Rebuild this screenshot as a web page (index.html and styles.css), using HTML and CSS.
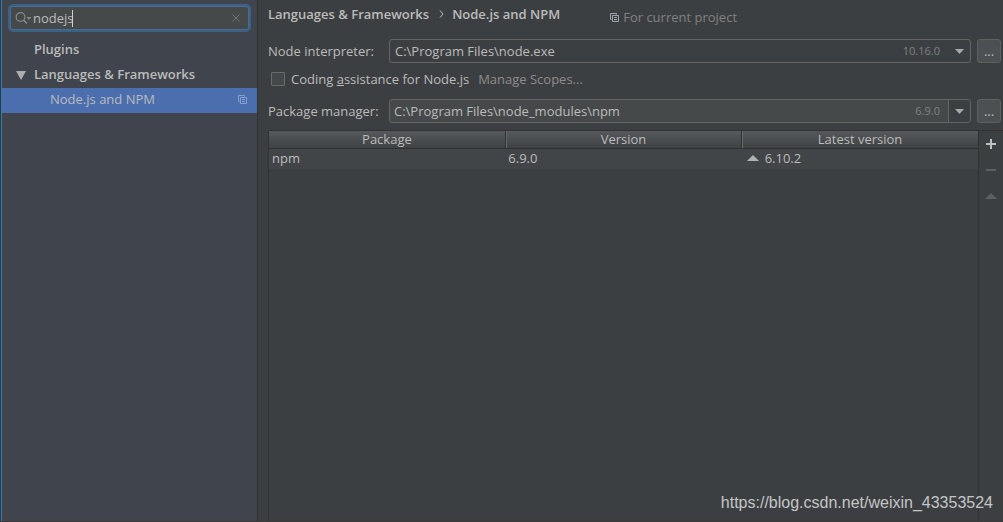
FILE: index.html
```html
<!DOCTYPE html>
<html lang="en">
<head>
<meta charset="utf-8">
<title>Settings</title>
<link rel="stylesheet" href="styles.css">
</head>
<body>
<div class="window">
  <aside class="sidebar">
    <label class="search">
      <svg class="search-icon" width="17" height="14" viewBox="0 0 17 14" aria-hidden="true"><circle cx="5.5" cy="6" r="4.4" fill="none" stroke="#84898c" stroke-width="1.2"/><path d="M8.7 9.2 12 12.5" stroke="#84898c" stroke-width="1.6"/><path d="M11.5 6h5L14 9z" fill="#84898c"/></svg>
      <input class="search-input" type="text" value="nodejs" aria-label="Search settings">
      <span class="caret"></span>
      <button class="clear" type="button" aria-label="Clear"><svg width="8" height="8" viewBox="0 0 8 8"><path d="M.5.5l7 7M7.5.5l-7 7" stroke="#6f7577" fill="none"/></svg></button>
    </label>
    <nav class="tree">
      <a class="node group" href="#">Plugins</a>
      <a class="node group" href="#"><svg class="twisty" width="10" height="9" viewBox="0 0 10 9" aria-hidden="true"><path d="M0 0h10L5 9z" fill="#adadad"/></svg>Languages &amp; Frameworks</a>
      <a class="node leaf selected" href="#">Node.js and NPM<svg class="scope" width="9" height="9" viewBox="0 0 9 9" fill="none" stroke="#8aa0cc" aria-hidden="true"><path d="M1.5 6.5h-1v-6h6v1M2.5 2.5h6v6h-6zM4 4.5h3M4 6.5h3"/></svg></a>
    </nav>
  </aside>
  <main class="main">
    <header class="crumbs">
      <h1 class="title">Languages &amp; Frameworks<svg class="chevron" width="5" height="8" viewBox="0 0 5 8" aria-hidden="true"><path d="M1 .5 4 4 1 7.5" fill="none" stroke="#bbb"/></svg>Node.js and NPM</h1>
      <span class="project"><svg width="9" height="9" viewBox="0 0 9 9" fill="none" stroke="#9aa7b0" aria-hidden="true"><path d="M1.5 6.5h-1v-6h6v1M2.5 2.5h6v6h-6zM4 4.5h3M4 6.5h3"/></svg>For current project</span>
    </header>
    <div class="field">
      <label class="field-label" for="interpreter">Node interpreter:</label>
      <div class="combo">
        <select class="combo-value" id="interpreter"><option>C:\Program Files\node.exe</option></select>
        <span class="version">10.16.0</span>
        <span class="arrow"><svg width="9" height="5" viewBox="0 0 9 5"><path d="M0 0h9L4.5 5z" fill="#a5a9ab"/></svg></span>
      </div>
      <button class="browse" type="button" aria-label="Browse interpreters">...</button>
    </div>
    <div class="assist">
      <input class="check" type="checkbox" id="assist">
      <label for="assist">Coding <u>a</u>ssistance for Node.js</label>
      <a class="scopes" href="#">Manage Scopes...</a>
    </div>
    <div class="field">
      <label class="field-label" for="manager">Package manager:</label>
      <div class="combo editable">
        <input class="combo-value" id="manager" type="text" value="C:\Program Files\node_modules\npm">
        <span class="version">6.9.0</span>
        <button class="arrow" type="button" aria-label="Show package managers"><svg width="9" height="5" viewBox="0 0 9 5"><path d="M0 0h9L4.5 5z" fill="#a5a9ab"/></svg></button>
      </div>
      <button class="browse" type="button" aria-label="Browse package managers">...</button>
    </div>
    <section class="packages">
      <div class="table-wrap">
        <table class="table">
          <thead><tr><th>Package</th><th>Version</th><th>Latest version</th></tr></thead>
          <tbody><tr><td>npm</td><td>6.9.0</td><td><svg class="upgrade" width="12" height="6" viewBox="0 0 12 6" aria-hidden="true"><path d="M0 6 6 0l6 6z" fill="#afb1b3"/></svg>6.10.2</td></tr></tbody>
        </table>
      </div>
      <div class="tools">
        <button class="tool" type="button" aria-label="Install"><svg width="10" height="10" viewBox="0 0 10 10"><path d="M5 0v10M0 5h10" stroke="#bfc1c2" stroke-width="2"/></svg></button>
        <button class="tool" type="button" aria-label="Uninstall" disabled><svg width="10" height="10" viewBox="0 0 10 10"><path d="M0 5h10" stroke="#5e6060" stroke-width="2"/></svg></button>
        <button class="tool" type="button" aria-label="Upgrade" disabled><svg width="12" height="6" viewBox="0 0 12 6"><path d="M0 6 6 0l6 6z" fill="#5e6060"/></svg></button>
      </div>
    </section>
  </main>
  <span class="watermark">https://blog.csdn.net/weixin_43353524</span>
</div>
</body>
</html>
```
FILE: styles.css
```css
* { box-sizing: border-box; }
body {
  margin: 0;
  background: #3c3f41;
  color: #bbbbbb;
  font: 13px/20px "Open Sans", "Noto Sans", sans-serif;
}
button, input, select { font: inherit; color: inherit; margin: 0; padding: 0; border: 0; background: none; outline: 0; }
button { display: flex; align-items: center; justify-content: center; }
a { color: inherit; text-decoration: none; }
svg { flex: none; display: block; }
.window { position: relative; display: flex; min-height: 100vh; border-left: 1px solid #3a3437; border-bottom: 1px solid #3f3738; }
.sidebar { flex: none; width: 257px; background: #40444c; border-left: 1px solid #2d7fb9; border-right: 1px solid #323232; padding-top: 4px; }
.search { display: flex; align-items: center; height: 28px; margin: 0 6px 6px; padding: 0 9px 0 5px; border: 2px solid #3d6185; border-radius: 5px; background: #45494a; box-shadow: inset 0 0 0 1px #466d94; }
.search-input { width: 39px; margin-left: 1px; }
.caret { width: 1px; height: 17px; background: #d0d0d0; }
.clear { margin-left: auto; }
.node { display: flex; align-items: center; height: 25px; padding: 0 10px 3px 32px; }
.group { position: relative; font-weight: 600; }
.twisty { position: absolute; left: 14px; top: 8px; }
.leaf { padding-left: 48px; }
.selected { background: #4b6eaf; }
.scope { margin-left: auto; }
.main { flex: 1; min-width: 0; display: flex; flex-direction: column; padding: 4px 0 0 10px; }
.crumbs { display: flex; align-items: flex-start; gap: 50px; height: 35px; }
.title { display: flex; align-items: center; margin: 0; font-size: 13px; font-weight: 600; }
.chevron { margin: 0 8px 0 10px; }
.project { display: flex; align-items: center; gap: 4px; margin-top: 3px; color: #7f8182; }
.field { display: flex; align-items: center; padding-right: 2px; }
.field-label { flex: none; width: 121px; }
.combo { flex: 1; min-width: 0; display: flex; align-items: center; height: 24px; border: 1px solid #646464; border-radius: 3px; }
.combo-value { flex: 1; min-width: 0; height: 22px; padding-left: 5px; appearance: none; }
.version { margin-right: 8px; color: #7f8182; font-size: 11px; }
.arrow { flex: none; display: flex; align-items: center; justify-content: center; width: 22px; height: 22px; border-left: 1px solid transparent; }
.editable { background: #45494a; }
.editable .combo-value { padding-left: 4px; }
.editable .arrow { background: #3c3f41; border-left-color: #646464; border-radius: 0 2px 2px 0; }
.browse { flex: none; width: 24px; height: 24px; margin-left: 6px; border: 1px solid #5e6060; border-radius: 3px; background: #4c5052; }
.assist { display: flex; align-items: center; height: 36px; padding: 0 0 4px 3px; }
.check { appearance: none; width: 14px; height: 14px; margin-right: 6px; border: 1px solid #6b6b6b; border-radius: 1px; background: #43494a; }
.scopes { margin-left: 9px; color: #8c8c8c; }
.packages { flex: 1; display: flex; margin-top: 7px; border: solid #323232; border-width: 1px 0 0 1px; }
.table-wrap { flex: 1; border-right: 1px solid #323232; }
.table { width: 100%; table-layout: fixed; border-collapse: collapse; }
.table th { height: 17px; padding: 0; line-height: 16px; font-weight: normal; background: linear-gradient(#55595b, #3f4244); border-bottom: 1px solid #2f3132; border-right: 1px solid #2f3132; }
.table th + th { border-left: 1px solid #2f3132; box-shadow: inset 1px 0 #666a6c; }
.table th:last-child { border-right: 0; }
.table td { height: 21px; padding: 0 3px 1px; line-height: 19px; background: #414547; }
.upgrade { display: inline-block; margin: 0 6px 2px 2px; }
.tools { flex: none; width: 24px; display: flex; flex-direction: column; }
.tool { width: 24px; height: 26px; }
.watermark { position: absolute; right: 10px; bottom: 7px; color: #c4c5c6; font: 16px/22px "Liberation Sans", Arial, sans-serif; }
```
